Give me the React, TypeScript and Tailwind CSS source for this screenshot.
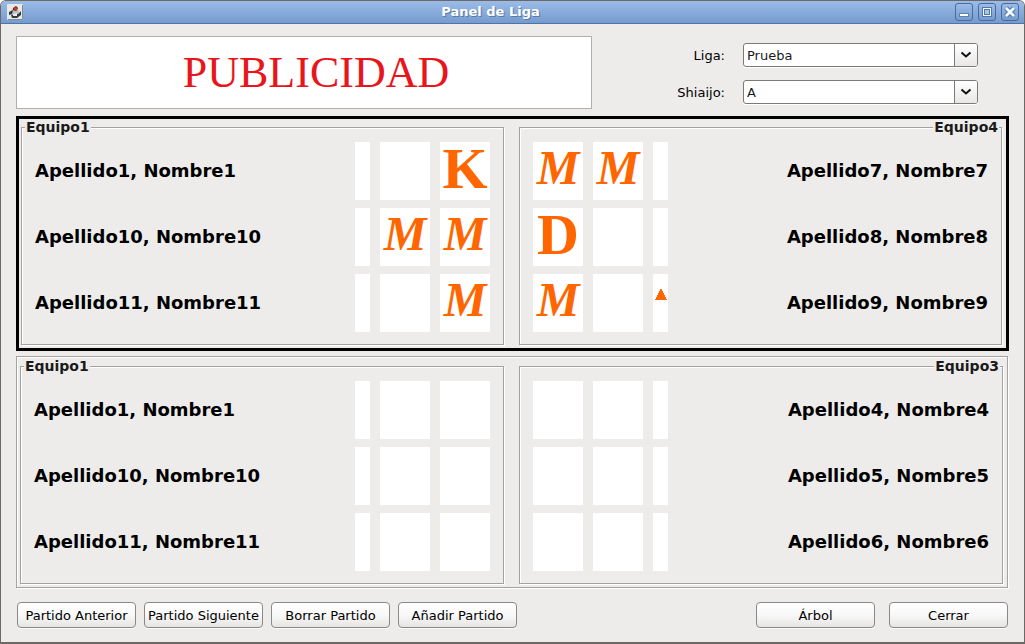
import { ReactNode } from 'react';

type Mark = '' | 'K' | 'M' | 'D' | 'triangle';
type Member = { name: string; marks: [Mark, Mark, Mark] };
type Team = { name: string; members: Member[] };

const currentLeft: Team = {
  name: 'Equipo1',
  members: [
    { name: 'Apellido1, Nombre1', marks: ['', '', 'K'] },
    { name: 'Apellido10, Nombre10', marks: ['', 'M', 'M'] },
    { name: 'Apellido11, Nombre11', marks: ['', '', 'M'] },
  ],
};
const currentRight: Team = {
  name: 'Equipo4',
  members: [
    { name: 'Apellido7, Nombre7', marks: ['M', 'M', ''] },
    { name: 'Apellido8, Nombre8', marks: ['D', '', ''] },
    { name: 'Apellido9, Nombre9', marks: ['M', '', 'triangle'] },
  ],
};
const nextLeft: Team = {
  name: 'Equipo1',
  members: [
    { name: 'Apellido1, Nombre1', marks: ['', '', ''] },
    { name: 'Apellido10, Nombre10', marks: ['', '', ''] },
    { name: 'Apellido11, Nombre11', marks: ['', '', ''] },
  ],
};
const nextRight: Team = {
  name: 'Equipo3',
  members: [
    { name: 'Apellido4, Nombre4', marks: ['', '', ''] },
    { name: 'Apellido5, Nombre5', marks: ['', '', ''] },
    { name: 'Apellido6, Nombre6', marks: ['', '', ''] },
  ],
};

function MarkCell({ mark, narrow }: { mark: Mark; narrow: boolean }) {
  return (
    <div className={`flex h-[58px] shrink-0 justify-center bg-white ${narrow ? 'w-[15px]' : 'w-[50px]'}`}>
      {mark === 'triangle' && (
        <svg className="mt-[14px] h-3 w-3" viewBox="0 0 12 12" fill="#ff6600" shapeRendering="crispEdges">
          <path d="M6 0L12 12H0Z" />
        </svg>
      )}
      {mark === 'M' && (
        <span className="font-['Liberation_Serif',serif] text-[48px] leading-[52px] font-bold text-[#ff6600] italic">
          M
        </span>
      )}
      {(mark === 'K' || mark === 'D') && (
        <span className="font-['Liberation_Serif',serif] text-[58px] leading-[54px] font-bold text-[#ff6600]">
          {mark}
        </span>
      )}
    </div>
  );
}

function TeamBox({ team, side }: { team: Team; side: 'left' | 'right' }) {
  const right = side === 'right';
  return (
    <fieldset className="min-w-0 border border-[#a3a2a0] pt-[7px] pb-3 shadow-[1px_1px_0_#fff,inset_1px_1px_0_#fff]">
      <legend
        className={`bg-[#edecea] px-px text-[14px] leading-4 font-bold text-[#1a1a1a] ${right ? 'mr-[2px] ml-auto' : 'ml-[3px]'}`}
      >
        {team.name}
      </legend>
      <div className="flex flex-col gap-2">
        {team.members.map((m) => (
          <div
            key={m.name}
            className={`flex items-center justify-between px-[13px] ${right ? 'flex-row-reverse' : ''}`}
          >
            <span className="text-[18px] leading-6 font-bold whitespace-nowrap text-black">{m.name}</span>
            <div className="flex gap-[10px]">
              {m.marks.map((mark, i) => (
                <MarkCell key={i} mark={mark} narrow={i === (right ? 2 : 0)} />
              ))}
            </div>
          </div>
        ))}
      </div>
    </fieldset>
  );
}

function Picker({ id, label, value }: { id: string; label: string; value: string }) {
  return (
    <div className="flex items-center">
      <label htmlFor={id} className="w-[134px] pt-[2px] pr-[18px] text-right text-[13px] leading-4">
        {label}
      </label>
      <div className="relative flex-1">
        <select
          id={id}
          defaultValue={value}
          className="block h-6 w-full appearance-none rounded-[3px] border border-[#7c7a77] bg-white pt-[2px] pl-[3px] text-[13px] text-[#1a1a1a] shadow-[0_1px_0_#fff]"
        >
          <option>{value}</option>
        </select>
        <div className="pointer-events-none absolute inset-y-px right-px flex w-[23px] items-center justify-center rounded-r-[2px] border-l border-[#7c7a77] bg-linear-to-b from-white to-[#e8e7e6]">
          <svg className="h-3 w-3" viewBox="0 0 12 12" fill="none" stroke="#111" strokeWidth="2">
            <path d="M1.5 3.5L6 7.5L10.5 3.5" />
          </svg>
        </div>
      </div>
    </div>
  );
}

function PushButton({ children }: { children: ReactNode }) {
  return (
    <button
      type="button"
      className="h-[26px] w-[119px] rounded-[4px] border border-[#8b8987] bg-linear-to-b from-white via-[#f8f8f8] to-[#e6e5e3] pt-px text-[13px] whitespace-nowrap text-black shadow-[0_1px_0_#fafafa]"
    >
      {children}
    </button>
  );
}

function WindowButton({ label, children }: { label: string; children: ReactNode }) {
  return (
    <button
      type="button"
      aria-label={label}
      className="flex h-[18px] w-[18px] items-center justify-center rounded-[3px] border border-[#476a9f] bg-linear-to-b from-[#9cbce8] to-[#769bcc]"
    >
      <svg className="h-4 w-4" viewBox="0 0 16 16">
        {children}
      </svg>
    </button>
  );
}

export default function App() {
  return (
    <div className="bg-white font-['DejaVu_Sans',sans-serif] text-black">
      <div className="flex min-h-screen flex-col overflow-hidden rounded-t-[6px] border border-b-2 border-[#6b6865] bg-[#edecea]">
        <header className="flex h-[23px] shrink-0 items-center border-b border-[#4d75aa] bg-linear-to-b from-[#9bbce8] to-[#759bcd] pr-[5px] pl-[6px]">
          <div className="flex flex-1">
            <svg className="h-4 w-4" viewBox="0 0 16 16">
              <rect width="16" height="16" rx="1" fill="#e9e9e4" />
              <path d="M1 15.5H15.5V1" fill="none" stroke="#7f8c93" />
              <path d="M5 5L9 3L12 7L11 13H5L3 9Z" fill="#b9c0c2" />
              <path d="M2 8L6 6L5 10L2 11Z" fill="#30383c" />
              <path d="M4 11L11 10L14 7V11L10 14H5Z" fill="#343b3f" />
              <path d="M6 10L10 9V12H6Z" fill="#e8eded" />
              <path d="M6 4L9 2L11 4L9 7L6 6Z" fill="#2b2424" />
              <circle cx="8.5" cy="4.8" r="1.9" fill="#dd2e2b" />
            </svg>
          </div>
          <h1 className="pr-[45px] text-[13px] leading-4 font-bold text-white [text-shadow:1px_1px_0_#5878a4]">
            Panel de Liga
          </h1>
          <div className="flex flex-1 justify-end gap-[5px]">
            <WindowButton label="Minimizar">
              <rect x="3.5" y="9.5" width="9" height="3" fill="#fff" stroke="#5c81b5" />
            </WindowButton>
            <WindowButton label="Maximizar">
              <rect x="3" y="3" width="10" height="10" fill="#5177ad" />
              <rect x="4" y="4" width="8" height="8" fill="#f4f8ff" />
              <rect x="5" y="5" width="6" height="6" fill="#5177ad" />
              <rect x="6" y="6" width="4" height="4" fill="#a9c3e8" />
            </WindowButton>
            <WindowButton label="Cerrar ventana">
              <path d="M4 4L12 12M12 4L4 12" stroke="#5177ad" strokeWidth="5" />
              <path d="M4 4L12 12M12 4L4 12" stroke="#f4f8ff" strokeWidth="2.8" />
            </WindowButton>
          </div>
        </header>

        <main className="flex flex-col pt-3 pr-4 pl-[15px]">
          <div className="flex justify-between pr-[30px]">
            <div className="flex h-[73px] w-[576px] items-center justify-center border border-[#b0afad] bg-white pl-6">
              <span className="font-['Liberation_Serif',serif] text-[44px] leading-[70px] text-[#e8161c]">PUBLICIDAD</span>
            </div>
            <div className="flex w-[369px] flex-col gap-[13px] pt-[7px]">
              <Picker id="liga" label="Liga:" value="Prueba" />
              <Picker id="shiaijo" label="Shiaijo:" value="A" />
            </div>
          </div>

          <section className="mt-[7px] -mr-px grid grid-cols-2 gap-[15px] border-[3px] border-black pr-1 pb-[3px] pl-[2px]">
            <TeamBox team={currentLeft} side="left" />
            <TeamBox team={currentRight} side="right" />
          </section>

          <section className="mt-[5px] grid grid-cols-2 gap-[15px] border border-[#a3a2a0] pt-px pr-1 pb-[3px] pl-[3px] shadow-[1px_1px_0_#fff,inset_1px_1px_0_#fff]">
            <TeamBox team={nextLeft} side="left" />
            <TeamBox team={nextRight} side="right" />
          </section>

          <footer className="mt-[14px] flex justify-between pl-px">
            <div className="flex gap-2">
              <PushButton>Partido Anterior</PushButton>
              <PushButton>Partido Siguiente</PushButton>
              <PushButton>Borrar Partido</PushButton>
              <PushButton>Añadir Partido</PushButton>
            </div>
            <div className="flex gap-[14px]">
              <PushButton>Árbol</PushButton>
              <PushButton>Cerrar</PushButton>
            </div>
          </footer>
        </main>
      </div>
    </div>
  );
}
